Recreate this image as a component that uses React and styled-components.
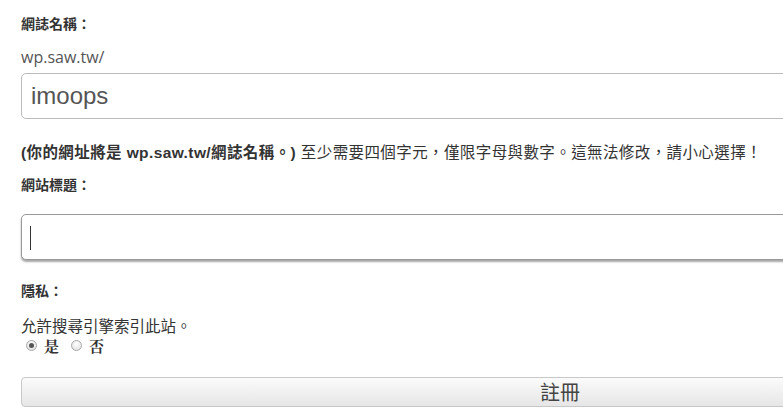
import styled, { createGlobalStyle } from "styled-components";

const GlobalStyle = createGlobalStyle`
  html, body {
    margin: 0;
    padding: 0;
    background: #fff;
    overflow: hidden;
  }
  body {
    font-family: "Open Sans", "Liberation Sans", "Noto Sans CJK TC", sans-serif;
    color: #333;
  }
`;

const Form = styled.form`
  width: 1078px;
  padding: 13px 0 0 21px;
  display: flex;
  flex-direction: column;
`;

const Label = styled.div`
  font-family: "Liberation Sans", "Noto Sans CJK TC", sans-serif;
  font-size: 14px;
  font-weight: bold;
  color: #333;
  line-height: 22px;
  margin-top: ${(p) => p.$top || 0}px;
  margin-bottom: ${(p) => p.$gap || 0}px;
`;

const Prefix = styled.div`
  font-size: 16px;
  color: #555;
  line-height: 22px;
  margin: 11px 0 5px;
`;

const Field = styled.div`
  position: relative;
`;

const TextInput = styled.input`
  box-sizing: border-box;
  display: block;
  width: 100%;
  height: 46px;
  padding: 0 9px;
  border: 1px solid ${(p) => (p.$focused ? "#999" : "#bbb")};
  border-radius: 5px;
  font-family: "Liberation Sans", "Noto Sans CJK TC", sans-serif;
  font-size: 24px;
  color: #555;
  background: #fff;
  outline: none;
  box-shadow: ${(p) => (p.$focused ? "0 2px 2px rgba(0,0,0,0.35)" : "none")};
`;

const Caret = styled.span`
  position: absolute;
  left: 9px;
  top: 12px;
  width: 1px;
  height: 24px;
  background: #333;
`;

const Help = styled.p`
  margin: 23px 0 10px;
  font-family: "Liberation Sans", "Noto Sans CJK TC", sans-serif;
  font-size: 15.5px;
  line-height: 22px;
  color: #333;
  letter-spacing: 0.4px;
  b {
    font-weight: bold;
  }
`;

const Plain = styled.p`
  margin: 15px 0 0;
  font-family: "Liberation Sans", "Noto Sans CJK TC", sans-serif;
  font-size: 15.5px;
  line-height: 20px;
  color: #333;
`;

const RadioRow = styled.div`
  display: flex;
  align-items: center;
  gap: 12px;
  padding-left: 5px;
  height: 16px;
  margin-bottom: 24px;
`;

const RadioLabel = styled.label`
  display: flex;
  align-items: center;
  gap: 7px;
  font-family: "Noto Serif CJK TC", "Noto Sans CJK TC", serif;
  font-size: 15px;
  font-weight: bold;
  color: #333;
`;

const Radio = styled.input`
  appearance: none;
  margin: 0;
  width: 11px;
  height: 11px;
  border-radius: 50%;
  border: 1px solid #a8a8a8;
  background: radial-gradient(circle at 50% 35%, #fff, #dcdcdc);
  display: grid;
  place-items: center;
  &:checked::after {
    content: "";
    width: 5px;
    height: 5px;
    border-radius: 50%;
    background: #555;
  }
`;

const Submit = styled.button`
  box-sizing: border-box;
  width: 100%;
  height: 30px;
  border: 1px solid #c8c8c8;
  border-radius: 4px;
  background: linear-gradient(#fbfbfb, #e6e6e6);
  font-family: "Noto Sans CJK TC", sans-serif;
  font-size: 20px;
  color: #444;
  line-height: 28px;
  padding: 0;
`;

export default function App() {
  return (
    <>
      <GlobalStyle />
      <Form onSubmit={(e) => e.preventDefault()}>
        <Label>網誌名稱：</Label>
        <Prefix>wp.saw.tw/</Prefix>
        <TextInput defaultValue="imoops" />
        <Help>
          <b>(你的網址將是 wp.saw.tw/網誌名稱。)</b> 至少需要四個字元，僅限字母與數字。這無法修改，請小心選擇！
        </Help>
        <Label $gap={18}>網站標題：</Label>
        <Field>
          <TextInput $focused />
          <Caret />
        </Field>
        <Label $top={20}>隱私：</Label>
        <Plain>允許搜尋引擎索引此站。</Plain>
        <RadioRow>
          <RadioLabel>
            <Radio type="radio" name="public" defaultChecked />是
          </RadioLabel>
          <RadioLabel>
            <Radio type="radio" name="public" />否
          </RadioLabel>
        </RadioRow>
        <Submit type="submit">註冊</Submit>
      </Form>
    </>
  );
}
